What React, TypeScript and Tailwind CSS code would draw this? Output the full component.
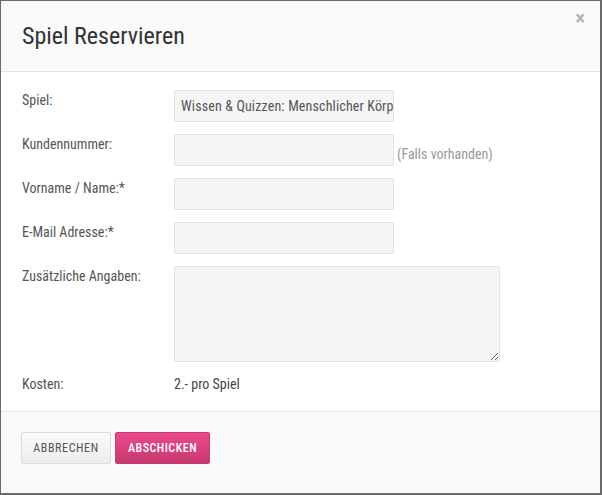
import React from "react";

// Reservation modal: header, form rows, footer with actions
const rows = [
  { id: "kunde", label: "Kundennummer:", hint: "(Falls vorhanden)" },
  { id: "name", label: "Vorname / Name:*" },
  { id: "mail", label: "E-Mail Adresse:*" },
];

const inputClass =
  "w-[220px] h-[32px] bg-[#f5f5f5] border border-[#e3e3e3] rounded-[2px] pl-[6px] pr-0 text-[14px] text-[#555] outline-none [font-stretch:86%] tracking-[0.15px]";

export default function App() {
  return (
    <div
      className="w-[602px] h-[495px] flex flex-col bg-white border-l border-t border-r-2 border-b-2 border-[#6a6a6a] text-[14px] text-[#555] relative [font-stretch:86%]"
      style={{ fontFamily: "Roboto, 'Liberation Sans', sans-serif" }}
    >
      {/* HEADER */}
      <div className="h-[71px] shrink-0 flex items-center px-[21px] bg-[#fafafa] border-b border-[#e5e5e5]">
        <h2 className="text-[24px] leading-none text-[#333] font-normal">Spiel Reservieren</h2>
      </div>
      <button className="absolute top-[7px] right-[15px] text-[21px] font-bold leading-none text-black/30">
        ×
      </button>

      {/* BODY */}
      <div className="shrink-0 px-[21px] pt-[18px] pb-[17px] flex flex-col gap-3 border-b border-[#e5e5e5]">
        <div className="flex items-start">
          <label className="w-[152px] leading-5">Spiel:</label>
          <input
            readOnly
            className={inputClass}
            value="Wissen & Quizzen: Menschlicher Körper"
          />
        </div>

        {rows.map((row) => (
          <div key={row.id} className="flex items-start">
            <label className="w-[152px] leading-5">{row.label}</label>
            <div className="flex items-end gap-[3px]">
              <input className={inputClass} />
              {row.hint && (
                <span className="leading-5 mb-[2px] text-[#999]">{row.hint}</span>
              )}
            </div>
          </div>
        ))}

        <div className="flex items-start">
          <label className="w-[152px] leading-5">Zusätzliche Angaben:</label>
          <textarea className="w-[326px] h-[96px] bg-[#f5f5f5] border border-[#e3e3e3] rounded-[2px] px-[6px] py-[6px] text-[14px] text-[#555] outline-none block" />
        </div>

        <div className="flex items-start">
          <label className="w-[152px] leading-5">Kosten:</label>
          <span className="leading-5 text-[#444]">2.- pro Spiel</span>
        </div>
      </div>

      {/* FOOTER */}
      <div className="flex-1 bg-[#fafafa] px-[20px] pt-[20px] flex items-start gap-[4px]">
        <button className="h-[32px] w-[90px] rounded-[2px] border border-[#dcdcdc] bg-gradient-to-b from-[#fbfbfb] to-[#ededed] text-[12px] text-[#555] uppercase [font-stretch:86%] tracking-[0.6px]">
          Abbrechen
        </button>
        <button className="h-[32px] w-[95px] rounded-[2px] border border-[#c93a73] bg-gradient-to-b from-[#eb4a8b] to-[#c6386f] text-[12px] font-medium text-white uppercase [font-stretch:86%] tracking-[0.5px]">
          Abschicken
        </button>
      </div>
    </div>
  );
}
